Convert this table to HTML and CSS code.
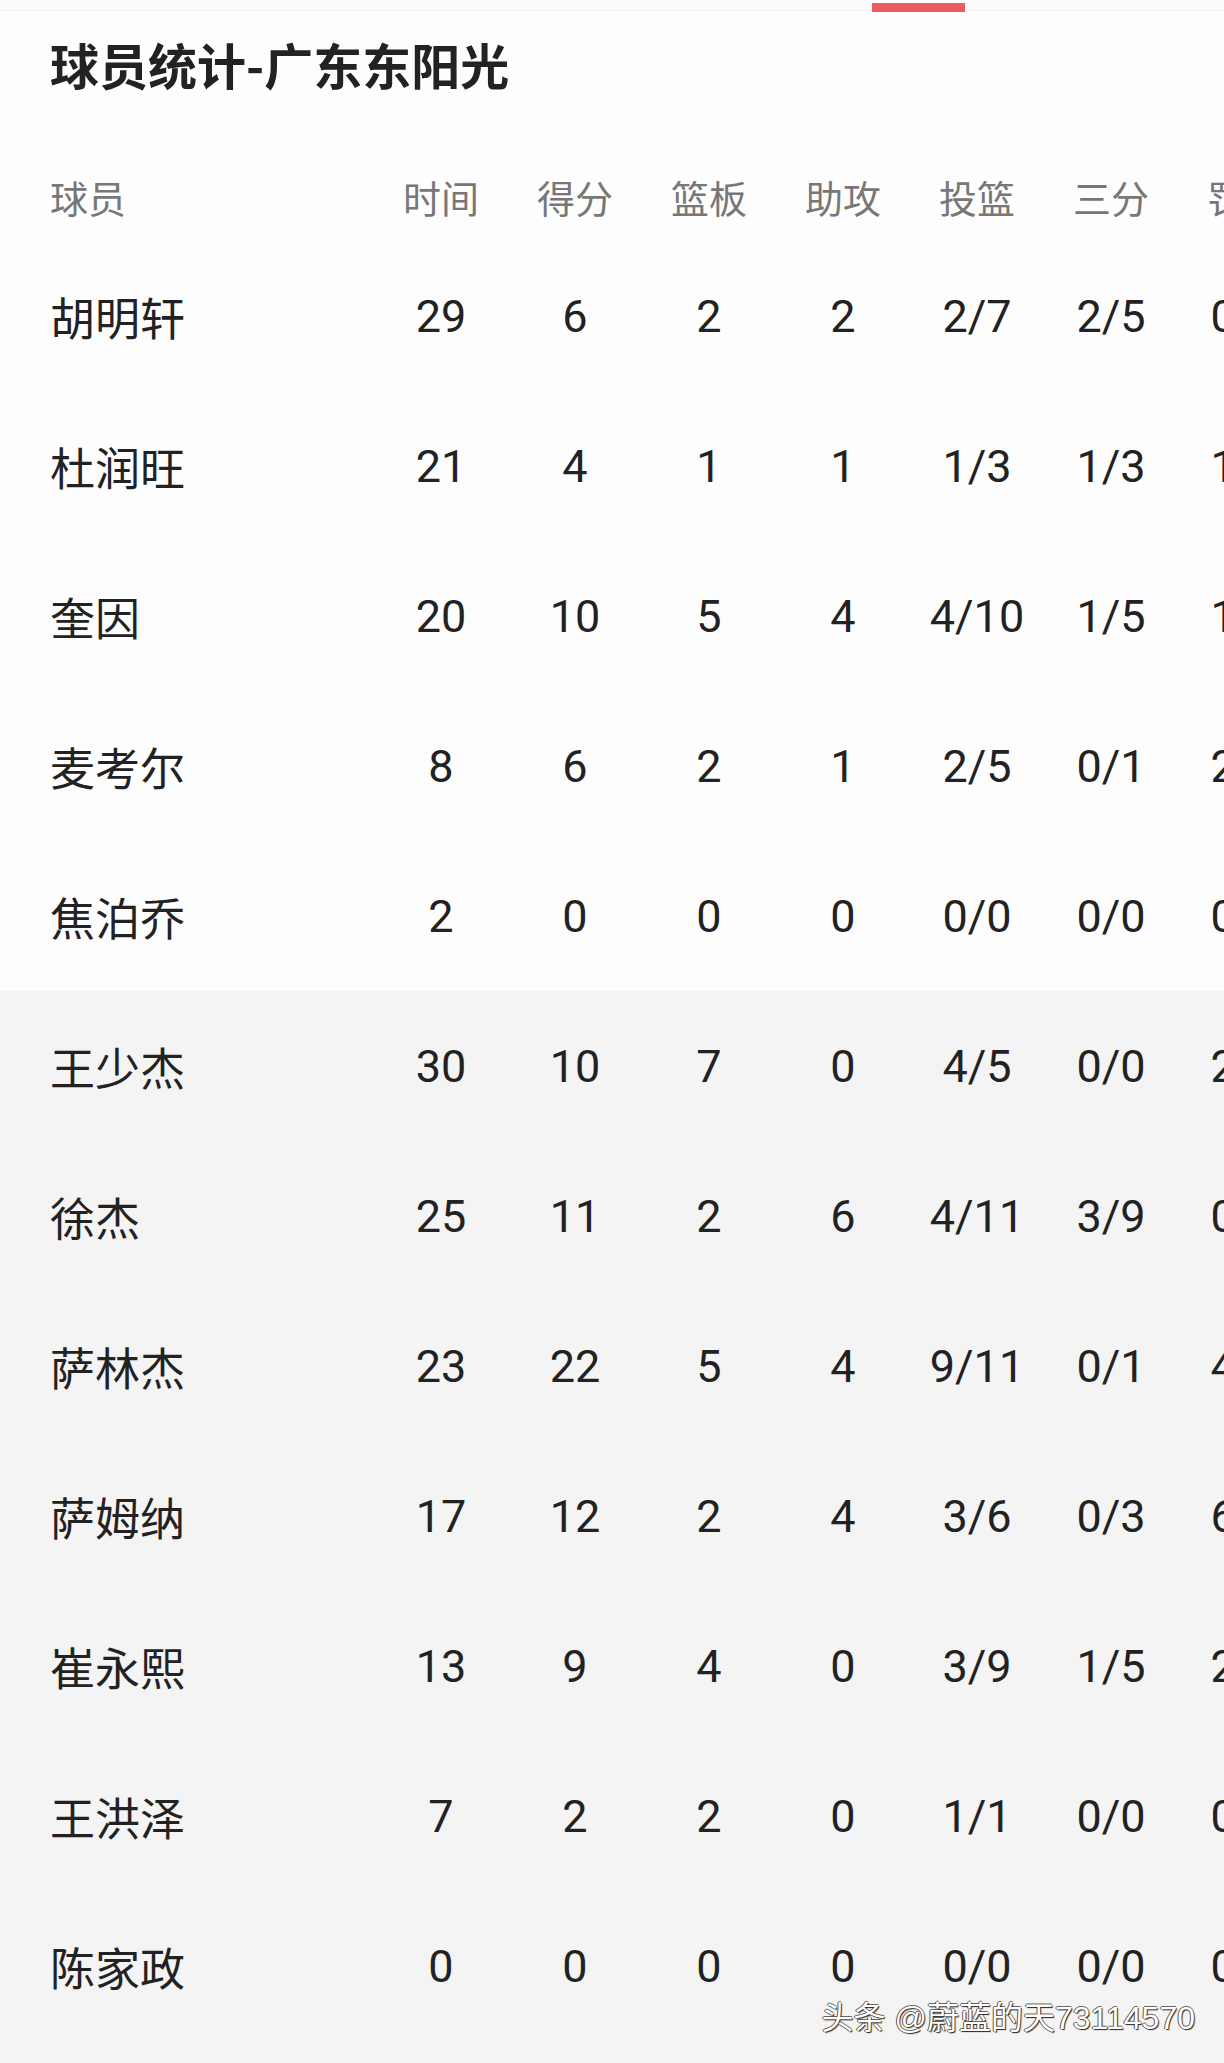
FILE: index.html
```html
<!DOCTYPE html>
<html lang="zh-CN">
<head>
<meta charset="utf-8">
<title>球员统计-广东东阳光</title>
<link rel="stylesheet" href="styles.css">
</head>
<body>
<div class="page">
  <div class="tabbar"><span class="tab-indicator"></span></div>
  <h1 class="title">球员统计-广东东阳光</h1>
  <div class="stats">
    <div class="row head">
      <div class="name">球员</div>
      <div class="cell">时间</div><div class="cell">得分</div><div class="cell">篮板</div><div class="cell">助攻</div><div class="cell">投篮</div><div class="cell">三分</div><div class="cell">罚球</div>
    </div>
    <div class="group starters">
      <div class="row"><div class="name">胡明轩</div><div class="cell">29</div><div class="cell">6</div><div class="cell">2</div><div class="cell">2</div><div class="cell">2/7</div><div class="cell">2/5</div><div class="cell">0/0</div></div>
      <div class="row"><div class="name">杜润旺</div><div class="cell">21</div><div class="cell">4</div><div class="cell">1</div><div class="cell">1</div><div class="cell">1/3</div><div class="cell">1/3</div><div class="cell">1/2</div></div>
      <div class="row"><div class="name">奎因</div><div class="cell">20</div><div class="cell">10</div><div class="cell">5</div><div class="cell">4</div><div class="cell">4/10</div><div class="cell">1/5</div><div class="cell">1/2</div></div>
      <div class="row"><div class="name">麦考尔</div><div class="cell">8</div><div class="cell">6</div><div class="cell">2</div><div class="cell">1</div><div class="cell">2/5</div><div class="cell">0/1</div><div class="cell">2/2</div></div>
      <div class="row"><div class="name">焦泊乔</div><div class="cell">2</div><div class="cell">0</div><div class="cell">0</div><div class="cell">0</div><div class="cell">0/0</div><div class="cell">0/0</div><div class="cell">0/0</div></div>
    </div>
    <div class="group bench">
      <div class="row"><div class="name">王少杰</div><div class="cell">30</div><div class="cell">10</div><div class="cell">7</div><div class="cell">0</div><div class="cell">4/5</div><div class="cell">0/0</div><div class="cell">2/2</div></div>
      <div class="row"><div class="name">徐杰</div><div class="cell">25</div><div class="cell">11</div><div class="cell">2</div><div class="cell">6</div><div class="cell">4/11</div><div class="cell">3/9</div><div class="cell">0/0</div></div>
      <div class="row"><div class="name">萨林杰</div><div class="cell">23</div><div class="cell">22</div><div class="cell">5</div><div class="cell">4</div><div class="cell">9/11</div><div class="cell">0/1</div><div class="cell">4/4</div></div>
      <div class="row"><div class="name">萨姆纳</div><div class="cell">17</div><div class="cell">12</div><div class="cell">2</div><div class="cell">4</div><div class="cell">3/6</div><div class="cell">0/3</div><div class="cell">6/8</div></div>
      <div class="row"><div class="name">崔永熙</div><div class="cell">13</div><div class="cell">9</div><div class="cell">4</div><div class="cell">0</div><div class="cell">3/9</div><div class="cell">1/5</div><div class="cell">2/2</div></div>
      <div class="row"><div class="name">王洪泽</div><div class="cell">7</div><div class="cell">2</div><div class="cell">2</div><div class="cell">0</div><div class="cell">1/1</div><div class="cell">0/0</div><div class="cell">0/0</div></div>
      <div class="row"><div class="name">陈家政</div><div class="cell">0</div><div class="cell">0</div><div class="cell">0</div><div class="cell">0</div><div class="cell">0/0</div><div class="cell">0/0</div><div class="cell">0/0</div></div>
    </div>
  </div>
  <div class="watermark">头条 @蔚蓝的天73114570</div>
</div>
</body>
</html>
```
FILE: styles.css
```css
html, body {
  margin: 0;
  padding: 0;
  background: #fdfdfd;
}
body {
  font-family: "Noto Sans CJK SC", "Noto Sans", sans-serif;
  color: #222;
}
.page {
  position: relative;
  width: 1224px;
  min-height: 2063px;
  overflow: hidden;
  background: #fdfdfd;
}
.tabbar {
  display: flex;
  height: 11px;
  padding-top: 3px;
  box-sizing: border-box;
  border-bottom: 1px solid #eceef1;
  background: #fbfbfb;
}
.tab-indicator {
  display: block;
  margin-left: 872px;
  width: 93px;
  height: 9px;
  background: #ee5b60;
}
.title {
  margin: 0 0 63px;
  padding: 23px 0 0 50px;
  font-size: 49px;
  line-height: 60px;
  font-weight: 700;
  color: #222;
}
.stats {
  display: flex;
  flex-direction: column;
}
.group.starters {
  background: #fdfdfd;
}
.group.bench {
  background: #f4f4f4;
  padding-bottom: 40px;
}
.row {
  display: flex;
  align-items: center;
  height: 150px;
  flex-wrap: nowrap;
}
.row.head {
  height: 78px;
  padding-bottom: 6px;
  color: #777;
  font-size: 38px;
}
.name {
  flex: 0 0 324px;
  padding-left: 50px;
  font-size: 45px;
  color: #222;
}
.row.head .name {
  font-size: 38px;
  color: #777;
}
.cell {
  flex: 0 0 134px;
  text-align: center;
  font-family: "Roboto", "Noto Sans CJK SC", sans-serif;
  font-size: 45px;
  color: #222;
}
.row.head .cell {
  font-family: "Noto Sans CJK SC", sans-serif;
  font-size: 38px;
  color: #777;
}
.watermark {
  position: absolute;
  right: 29px;
  top: 1996px;
  font-family: "Liberation Sans", "Noto Sans CJK SC", sans-serif;
  font-size: 32px;
  line-height: 44px;
  color: #fff;
  text-shadow: 1px 1px 1px #222, -1px 0 0 #555, 0 -1px 0 #666;
}
```
